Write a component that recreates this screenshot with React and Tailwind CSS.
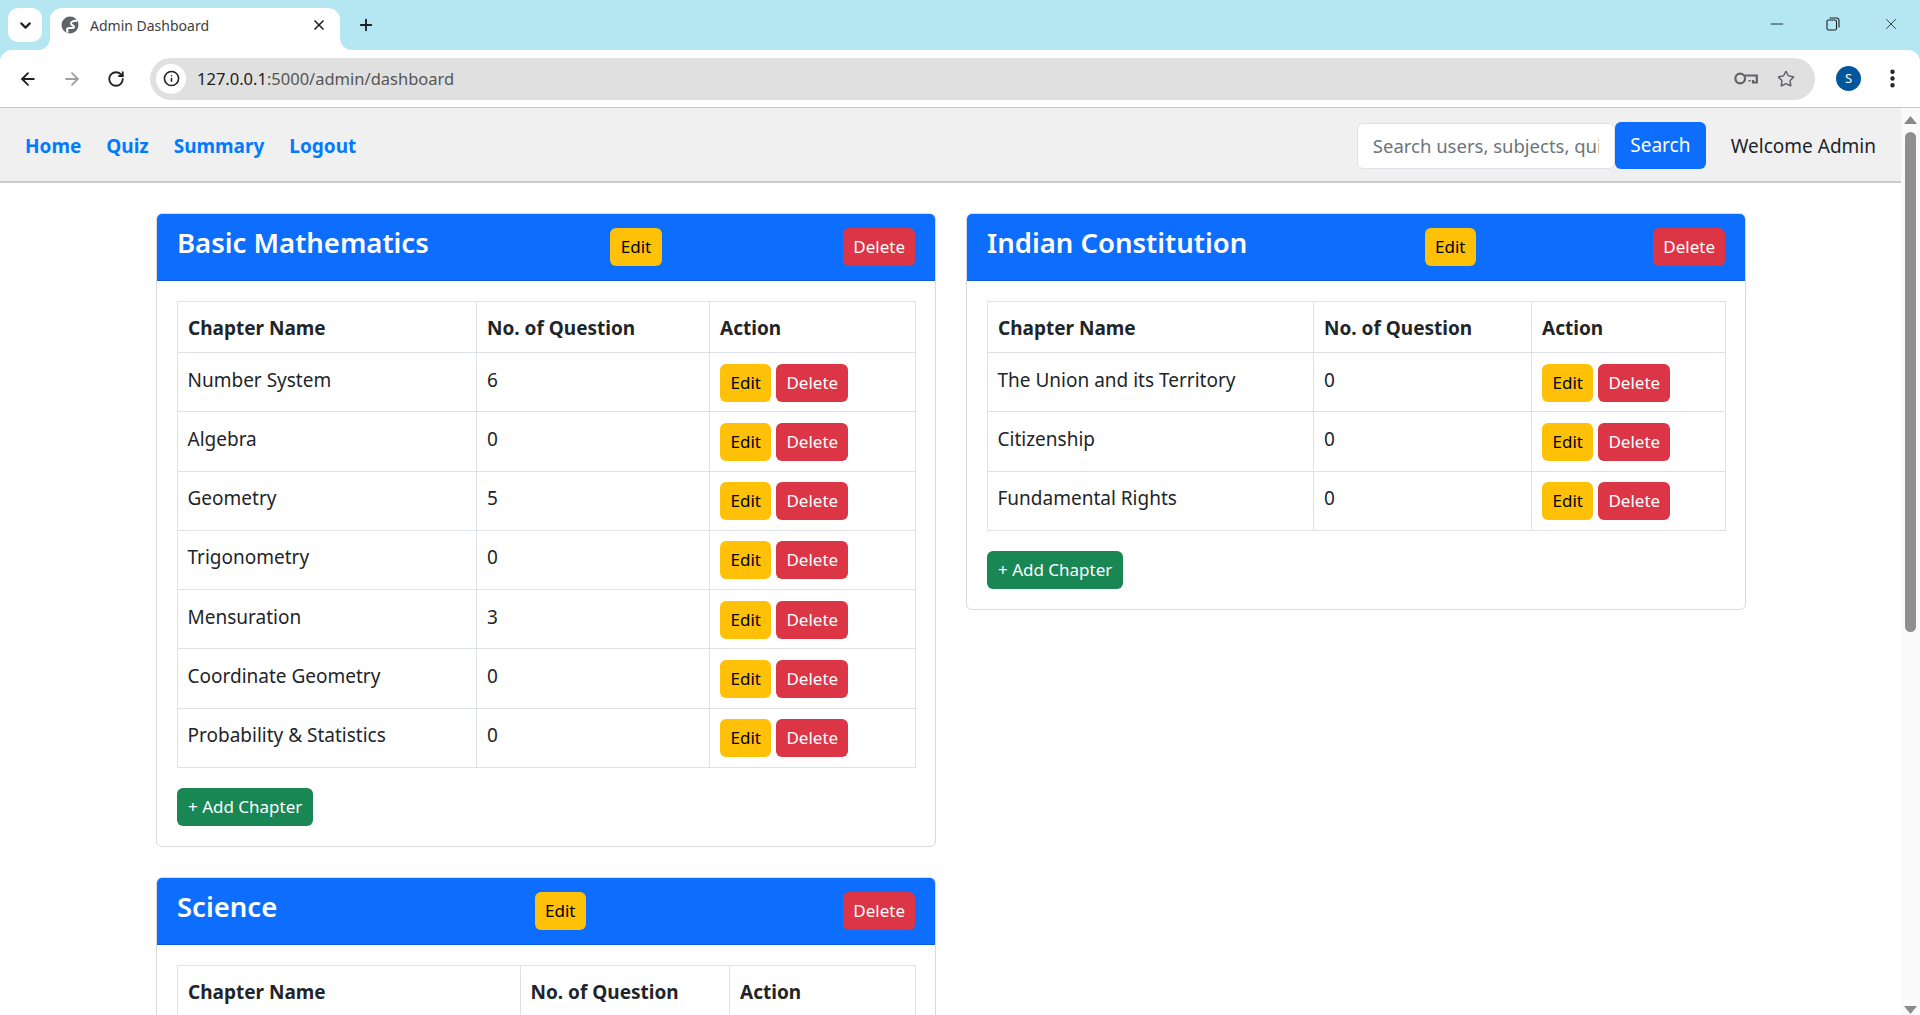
import React from 'react';
import { ArrowLeft, ArrowRight, ChevronDown, EllipsisVertical, Info, Minus, Plus, RotateCw, Star, X } from 'lucide-react';

const subjects = {
    maths: {
        title: 'Basic Mathematics',
        cols: ['w-[299px]', 'w-[233px]', 'w-[205.5px]'],
        chapters: [
            ['Number System', 6],
            ['Algebra', 0],
            ['Geometry', 5],
            ['Trigonometry', 0],
            ['Mensuration', 3],
            ['Coordinate Geometry', 0],
            ['Probability & Statistics', 0],
        ],
    },
    science: {
        title: 'Science',
        cols: ['w-[342.5px]', 'w-[209.5px]', 'w-[186px]'],
        chapters: [],
    },
    constitution: {
        title: 'Indian Constitution',
        cols: ['w-[326px]', 'w-[218px]', 'w-[193.5px]'],
        chapters: [
            ['The Union and its Territory', 0],
            ['Citizenship', 0],
            ['Fundamental Rights', 0],
        ],
    },
};

const Btn = ({ color, children }) => (
    <button className={`h-[38px] rounded-md text-[17px] leading-6 ${color}`}>{children}</button>
);

const EditBtn = () => <Btn color="px-[10.5px] bg-[#ffc107] text-black">Edit</Btn>;
const DeleteBtn = () => <Btn color="px-[10px] bg-[#dc3545] text-white">Delete</Btn>;

const SubjectCard = ({ subject }) => (
    <div className="rounded-md border border-[#d9dadb] bg-white overflow-hidden">
        <div className="h-[67px] px-5 pt-[14px] bg-[#0d6efd] border-b border-[#0b5ed7] flex justify-between items-start">
            <h3 className="text-[27.5px] leading-[30px] font-semibold text-white">{subject.title}</h3>
            <EditBtn />
            <DeleteBtn />
        </div>
        <div className="p-5">
            <table className="w-full table-fixed border-collapse text-[19px] text-[#212529]">
                <colgroup>
                    {subject.cols.map((c, i) => <col key={i} className={c} />)}
                </colgroup>
                <thead>
                    <tr className="h-[51px]">
                        <th className="border border-[#dee2e6] px-[10px] pt-[2px] text-left font-bold">Chapter Name</th>
                        <th className="border border-[#dee2e6] px-[10px] pt-[2px] text-left font-bold">No. of Question</th>
                        <th className="border border-[#dee2e6] px-[10px] pt-[2px] text-left font-bold">Action</th>
                    </tr>
                </thead>
                <tbody>
                    {subject.chapters.map(([name, count]) => (
                        <tr key={name} className="h-[59.3px]">
                            <td className="border border-[#dee2e6] px-[9.5px] pt-[12.5px] leading-7 align-top">{name}</td>
                            <td className="border border-[#dee2e6] px-[10px] pt-[12.5px] leading-7 align-top">{count}</td>
                            <td className="border border-[#dee2e6] px-[10px] pt-[10.5px] align-top">
                                <div className="flex gap-[5px]"><EditBtn /><DeleteBtn /></div>
                            </td>
                        </tr>
                    ))}
                </tbody>
            </table>
            {subject.chapters.length > 0 && (
                <div className="mt-5">
                    <Btn color="px-[11px] bg-[#198754] text-white">+ Add Chapter</Btn>
                </div>
            )}
        </div>
    </div>
);

const BrowserChrome = () => (
    <div className="shrink-0 font-['Noto_Sans',sans-serif]">
        <div className="h-[50px] bg-[#b5e7f3] flex items-start pl-2">
            <div className="mt-2 w-[34px] h-[34px] rounded-[10px] bg-white flex items-center justify-center text-[#202124]">
                <ChevronDown size={17} strokeWidth={3} />
            </div>
            <div className="relative ml-2 mt-2 w-[290px] h-[42px] pb-2 bg-white rounded-t-xl flex items-center pl-[11px] pr-[13px]">
                <svg width="12" height="12" viewBox="0 0 12 12" className="absolute -left-3 bottom-0"><path d="M12 0V12H0A12 12 0 0 0 12 0Z" fill="#fff" /></svg>
                <svg width="12" height="12" viewBox="0 0 12 12" className="absolute -right-3 bottom-0"><path d="M0 0V12H12A12 12 0 0 1 0 0Z" fill="#fff" /></svg>
                <svg width="18" height="18" viewBox="0 0 18 18">
                    <circle cx="9" cy="9" r="8.5" fill="#5f6368" />
                    <path d="M16 5C12.5 4.5 10 5.5 10 7.5C10 9.5 13 9 13 11C13 13 8 11 6.5 12.5C5.5 13.5 6 15 7 16.5" fill="none" stroke="#fff" strokeWidth="2" />
                </svg>
                <span className="ml-[11px] text-[14px] text-[#3c4043]">Admin Dashboard</span>
                <X size={16} strokeWidth={2.5} className="ml-auto text-[#202124]" />
            </div>
            <Plus size={18} strokeWidth={2.5} className="ml-[17px] mt-4 text-[#202124]" />
            <div className="ml-auto flex items-center h-12 text-[#202124]">
                <Minus size={20} strokeWidth={1.1} className="mr-[39px]" />
                <svg width="14" height="14" viewBox="0 0 14 14" fill="none" stroke="currentColor" strokeWidth="1.1" className="mr-[42px]">
                    <rect x="1" y="3" width="9.5" height="10" rx="1.5" />
                    <path d="M3.5 1h7a2.5 2.5 0 0 1 2.5 2.5v7" />
                </svg>
                <X size={18} strokeWidth={1.1} className="mr-[20px]" />
            </div>
        </div>
        <div className="h-[57px] bg-[#b5e7f3]">
            <div className="h-[57px] bg-white rounded-t-xl flex items-center pl-[18px] pr-[13px]">
                <ArrowLeft size={20} strokeWidth={2.2} className="text-[#202124]" />
                <ArrowRight size={20} strokeWidth={2.2} className="ml-[24px] text-[#a0a0a0]" />
                <RotateCw size={18} strokeWidth={2.4} className="ml-[25px] text-[#202124]" />
                <div className="ml-[25px] w-[1665px] h-[42px] rounded-full bg-[#e0e0e0] flex items-center pl-[6px] pr-[20px]">
                    <div className="w-[30px] h-[30px] rounded-full bg-white flex items-center justify-center text-[#202124]">
                        <Info size={17} strokeWidth={2.2} />
                    </div>
                    <span className="ml-[11px] pt-[2px] text-[16.5px] text-[#555]"><span className="text-[#202124]">127.0.0.1</span>:5000/admin/dashboard</span>
                    <svg width="24" height="13" viewBox="0 0 24 13" fill="none" stroke="#606368" strokeWidth="2.2" className="ml-auto">
                        <circle cx="6.2" cy="6.5" r="4.8" />
                        <path d="M11 3.5H22.8V10.5H19V8M15.5 8V9.5" />
                    </svg>
                    <Star size={18} strokeWidth={2} className="ml-[19px] text-[#606368]" />
                </div>
                <div className="ml-[21px] w-[25px] h-[25px] rounded-full bg-[#01579b] flex items-center justify-center text-white text-[13px]">S</div>
                <EllipsisVertical size={23} strokeWidth={2.6} className="ml-[19.5px] text-[#202124]" />
            </div>
        </div>
        <div className="h-px bg-[#c8c8c8]" />
    </div>
);

const Scrollbar = () => (
    <div className="w-[19px] shrink-0 bg-[#fafafa] flex flex-col items-center pt-2 pb-px">
        <svg width="13" height="8" viewBox="0 0 13 8"><path d="M6.5 0L13 8H0Z" fill="#8a8a8a" /></svg>
        <div className="mt-2 w-[11px] h-[500px] rounded-full bg-[#8f8f8f]" />
        <svg width="13" height="8" viewBox="0 0 13 8" className="mt-auto"><path d="M0 0H13L6.5 8Z" fill="#8a8a8a" /></svg>
    </div>
);

const App = () => (
    <div className="h-screen overflow-hidden flex flex-col bg-white font-['Noto_Sans',sans-serif] text-base text-[#212529]">
        <BrowserChrome />
        <div className="flex-1 min-h-0 flex">
            <div className="flex-1 min-w-0 overflow-hidden">
                <nav className="h-[75px] pt-[2px] bg-[#f0f0f0] border-b-2 border-[#ccc] flex items-center pl-[25px] pr-[25px] text-[19px]">
                    <div className="flex gap-[25px] pt-px font-bold text-[#007bff]">
                        <a>Home</a>
                        <a>Quiz</a>
                        <a>Summary</a>
                        <a>Logout</a>
                    </div>
                    <div className="ml-auto flex items-center">
                        <input
                            placeholder="Search users, subjects, quizzes"
                            className="w-[258px] h-[46px] px-[15px] text-[18.5px] bg-white border border-[#dee2e6] rounded-md placeholder:text-[#6c757d]"
                        />
                        <button className="w-[91px] h-[47px] rounded-md bg-[#0d6efd] text-white">Search</button>
                        <span className="ml-[25px] pt-px">Welcome Admin</span>
                    </div>
                </nav>
                <div className="pl-[156px] pr-[155px] pt-[30px] grid grid-cols-2 gap-[30px] items-start">
                    <div className="flex flex-col gap-[30px]">
                        <SubjectCard subject={subjects.maths} />
                        <SubjectCard subject={subjects.science} />
                    </div>
                    <SubjectCard subject={subjects.constitution} />
                </div>
            </div>
            <Scrollbar />
        </div>
    </div>
);

export default App;
